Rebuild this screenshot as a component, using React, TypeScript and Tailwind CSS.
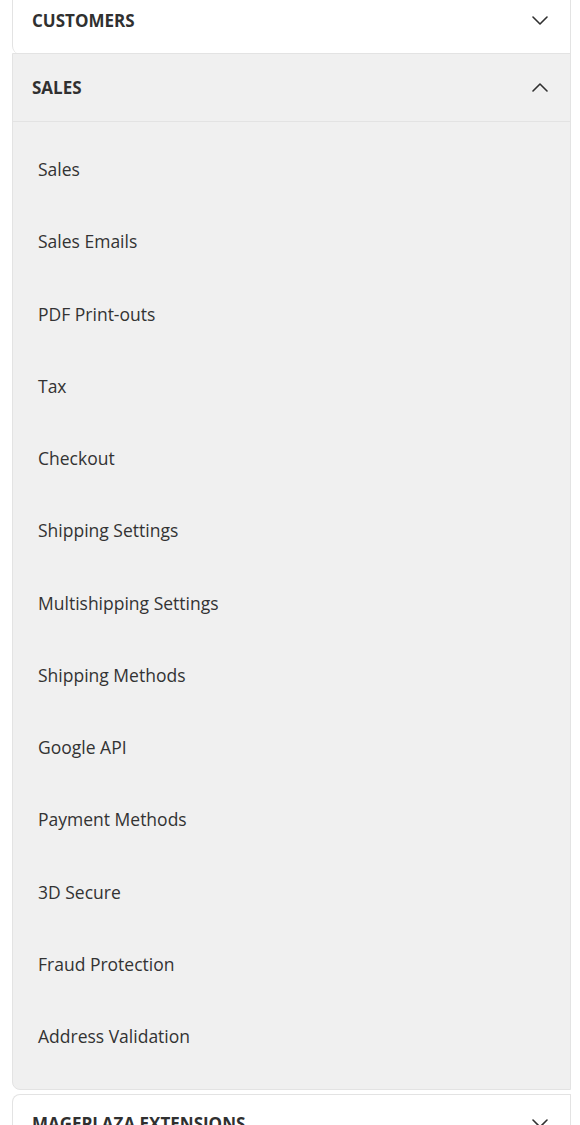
const salesLinks = [
    "Sales",
    "Sales Emails",
    "PDF Print-outs",
    "Tax",
    "Checkout",
    "Shipping Settings",
    "Multishipping Settings",
    "Shipping Methods",
    "Google API",
    "Payment Methods",
    "3D Secure",
    "Fraud Protection",
    "Address Validation"
]

const Chevron = ({ up }: { up?: boolean }) => (
    <svg width="16" height="9" viewBox="0 0 16 9" fill="none" className="text-[#303030]">
        <path
            d={up ? "M1 8 8 1l7 7" : "M1 1 8 8l7-7"}
            stroke="currentColor"
            strokeWidth="1.6"
            strokeLinecap="round"
            strokeLinejoin="round"
        />
    </svg>
)

const SectionHeader = ({ title, open, short }: { title: string; open?: boolean; short?: boolean }) => (
    <div className={`${short ? 'h-[57px]' : 'h-[67px]'} flex items-center justify-between pl-[19px] pr-[22px]`}>
        <span className="text-[17px] font-bold uppercase text-[#303030]">{title}</span>
        <Chevron up={open} />
    </div>
)

export default function App() {
    return (
        <div className="w-[580px] h-[1125px] overflow-hidden bg-white font-['Open_Sans',sans-serif]">
            <div className="pl-3 pr-[9px] -mt-[13px] flex flex-col">

                {/* Customers */}
                <div className="bg-white border-x border-[#e3e3e3] rounded-bl-lg">
                    <SectionHeader title="Customers" />
                </div>

                {/* Sales (expanded) */}
                <div className="-mt-px bg-[#f0f0f0] border border-[#e3e3e3] rounded-bl-lg">
                    <SectionHeader title="Sales" open />
                    <ul className="border-t border-[#e3e3e3] pt-[11px] pb-[17px]">
                        {salesLinks.map((link) => (
                            <li key={link} className="h-[72.25px] flex items-center pl-[25px] text-[17.5px] text-[#333]">
                                {link}
                            </li>
                        ))}
                    </ul>
                </div>

                {/* Mageplaza */}
                <div className="mt-[4px] bg-white border-x border-t border-[#e3e3e3] rounded-tl-lg">
                    <SectionHeader title="Mageplaza Extensions" short />
                </div>
            </div>
        </div>
    )
}
